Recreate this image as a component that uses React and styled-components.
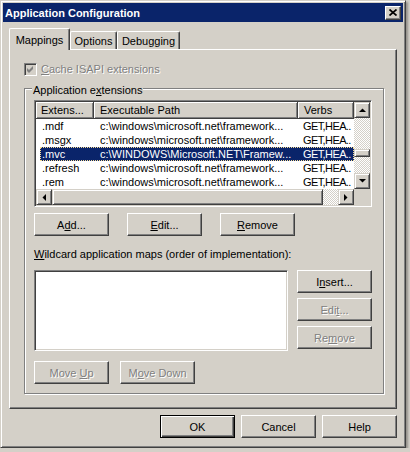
import React from "react";
import styled, { createGlobalStyle, css } from "styled-components";

const FACE = "#d4d0c8";
const SHADOW = "#808080";
const DARK = "#404040";
const NAVY = "#0a246a";

const GlobalStyle = createGlobalStyle`
  html, body { margin: 0; padding: 0; }
  body {
    background: #d4d0c8;
    font-family: "Liberation Sans", Arial, sans-serif;
    font-size: 11px;
    color: #000;
  }
  * { box-sizing: border-box; }
`;

const Window = styled.div`
  width: 406px;
  height: 448px;
  background: ${FACE};
  border: 1px solid;
  border-color: ${FACE} ${DARK} ${DARK} ${FACE};
  box-shadow: inset 1px 1px #fff, inset -1px -1px ${SHADOW},
    2px 2px 2px rgba(0, 0, 0, 0.3);
  padding: 2px;
  display: flex;
  flex-direction: column;
`;

const TitleBar = styled.div`
  height: 19px;
  background: ${NAVY};
  color: #fff;
  font-weight: bold;
  display: flex;
  align-items: center;
  justify-content: space-between;
  padding: 0 2px 0 2px;
`;

const CloseBtn = styled.div`
  width: 16px;
  height: 14px;
  background: ${FACE};
  border: 1px solid;
  border-color: #fff ${DARK} ${DARK} #fff;
  box-shadow: inset -1px -1px ${SHADOW};
  display: flex;
  align-items: center;
  justify-content: center;
`;

const Body = styled.div`
  flex: 1;
  padding: 6px 6px 0 6px;
  display: flex;
  flex-direction: column;
`;

const TabRow = styled.div`
  height: 21px;
  display: flex;
  align-items: flex-end;
`;

const Tab = styled.div`
  width: ${(p) => p.$w}px;
  height: 18px;
  padding-top: 1px;
  display: flex;
  align-items: center;
  justify-content: center;
  background: ${FACE};
  border-top: 1px solid #fff;
  border-left: 1px solid #fff;
  border-right: 1px solid ${DARK};
  box-shadow: inset -1px 0 ${SHADOW};
  border-radius: 2px 2px 0 0;
  ${(p) =>
    p.$active &&
    css`
      height: 22px;
      padding-top: 0;
      margin-bottom: -1px;
      position: relative;
      z-index: 1;
    `}
`;

const Panel = styled.div`
  height: 360px;
  background: ${FACE};
  border: 1px solid;
  border-color: #fff ${DARK} ${DARK} #fff;
  box-shadow: inset -1px -1px ${SHADOW};
  padding: 13px 12px 0 14px;
  display: flex;
  flex-direction: column;
`;

const CheckRow = styled.div`
  height: 13px;
  display: flex;
  align-items: center;
  gap: 4px;
`;

const CheckBox = styled.div`
  width: 13px;
  height: 13px;
  border: 1px solid;
  border-color: ${SHADOW} #fff #fff ${SHADOW};
  box-shadow: inset 1px 1px ${DARK}, inset -1px -1px ${FACE};
  background: ${FACE};
  display: flex;
  align-items: center;
  justify-content: center;
`;

const DisabledText = styled.span`
  color: ${SHADOW};
  text-shadow: 1px 1px #fff;
  line-height: 13px;
`;

const GroupBox = styled.div`
  margin-top: 12px;
  border: 1px solid ${SHADOW};
  box-shadow: inset 1px 1px #fff, 1px 1px #fff;
  padding: 0 11px 9px 9px;
  display: flex;
  flex-direction: column;
`;

const GroupLabel = styled.div`
  align-self: flex-start;
  margin: -5px 0 0 -2px;
  padding: 0 1px;
  line-height: 13px;
  background: ${FACE};
`;

const ListView = styled.div`
  margin-top: 3px;
  height: 107px;
  background: #fff;
  border: 1px solid;
  border-color: ${SHADOW} #fff #fff ${SHADOW};
  box-shadow: inset 1px 1px ${DARK}, inset -1px -1px ${FACE};
  padding: 1px;
  display: grid;
  grid-template-columns: 1fr 16px;
  grid-template-rows: 1fr 16px;
`;

const ListPane = styled.div`
  overflow: hidden;
  display: flex;
  flex-direction: column;
`;

const HeaderRow = styled.div`
  height: 17px;
  display: flex;
`;

const HeaderCell = styled.div`
  height: 17px;
  ${(p) => (p.$w ? css`width: ${p.$w}px;` : css`flex: 1;`)}
  padding-left: ${(p) => p.$pl}px;
  background: ${FACE};
  border-right: 1px solid ${DARK};
  border-bottom: 1px solid ${DARK};
  box-shadow: inset 1px 1px #fff, inset -1px -1px ${SHADOW};
  display: flex;
  align-items: center;
  white-space: nowrap;
  overflow: hidden;
`;

const Row = styled.div`
  height: 14px;
  display: flex;
`;

const RowBody = styled.div`
  margin-left: 4px;
  flex: 1;
  display: flex;
  ${(p) =>
    p.$selected &&
    css`
      background: ${NAVY};
      color: #fff;
      outline: 1px dotted #f5db95;
      outline-offset: -1px;
    `}
`;

const Cell = styled.div`
  ${(p) => (p.$w ? css`width: ${p.$w}px;` : css`flex: 1;`)}
  padding-left: ${(p) => p.$pl}px;
  line-height: 14px;
  white-space: nowrap;
  overflow: hidden;
  ${(p) => p.$tight && css`letter-spacing: -0.6px;`}
`;

const VScroll = styled.div`
  display: flex;
  flex-direction: column;
`;

const HScroll = styled.div`
  display: flex;
`;

const ScrollBtn = styled.div`
  width: 16px;
  height: 16px;
  flex: none;
  background: ${FACE};
  border: 1px solid;
  border-color: ${FACE} ${DARK} ${DARK} ${FACE};
  box-shadow: inset 1px 1px #fff, inset -1px -1px ${SHADOW};
  display: flex;
  align-items: center;
  justify-content: center;
`;

const Thumb = styled(ScrollBtn)`
  ${(p) => (p.$vertical ? css`height: ${p.$len}px;` : css`width: ${p.$len}px;`)}
`;

const Track = styled.div`
  flex: ${(p) => (p.$len != null ? "none" : "1")};
  ${(p) => p.$len != null && (p.$vertical ? css`height: ${p.$len}px;` : css`width: ${p.$len}px;`)}
  background: repeating-conic-gradient(#fff 0 25%, ${FACE} 0 50%) 0 0 / 2px 2px;
`;

const Corner = styled.div`
  background: ${FACE};
`;

const ButtonRow = styled.div`
  display: flex;
  gap: ${(p) => p.$gap}px;
  margin-top: ${(p) => p.$mt}px;
  justify-content: ${(p) => (p.$end ? "flex-end" : "flex-start")};
`;

const Button = styled.button`
  width: 75px;
  height: 23px;
  padding: 0;
  font: inherit;
  color: #000;
  background: ${FACE};
  border: 1px solid;
  border-color: #fff ${DARK} ${DARK} #fff;
  box-shadow: inset -1px -1px ${SHADOW};
  display: flex;
  align-items: center;
  justify-content: center;
  &:disabled {
    color: ${SHADOW};
    text-shadow: 1px 1px #fff;
  }
  ${(p) =>
    p.$default &&
    css`
      border-color: #000;
      box-shadow: inset 1px 1px #fff, inset -1px -1px ${DARK},
        inset -2px -2px ${SHADOW};
    `}
`;

const ButtonText = styled.span`
  white-space: pre;
`;

const Label = styled.div`
  margin-top: 12px;
  line-height: 13px;
`;

const WildArea = styled.div`
  margin-top: 9px;
  display: flex;
  gap: 9px;
`;

const ListBox = styled.div`
  width: 254px;
  height: 81px;
  background: #fff;
  border: 1px solid;
  border-color: ${SHADOW} #fff #fff ${SHADOW};
  box-shadow: inset 1px 1px ${DARK}, inset -1px -1px ${FACE};
`;

const SideButtons = styled.div`
  display: flex;
  flex-direction: column;
  gap: 5px;
`;

const Arrow = ({ dir }) => {
  const pts = {
    up: "0,4 7,4 3.5,0.5",
    down: "0,0 7,0 3.5,3.5",
    left: "4,0 4,7 0.5,3.5",
    right: "0,0 0,7 3.5,3.5",
  }[dir];
  const vert = dir === "up" || dir === "down";
  return (
    <svg width={vert ? 7 : 4} height={vert ? 4 : 7} viewBox={vert ? "0 0 7 4" : "0 0 4 7"}>
      <polygon points={pts} fill="#000" />
    </svg>
  );
};

const Btn = ({ children, ...rest }) => (
  <Button {...rest}>
    <ButtonText>{children}</ButtonText>
  </Button>
);

const rows = [
  [".mdf", "c:\\windows\\microsoft.net\\framework...", "GET,HEA.."],
  [".msgx", "c:\\windows\\microsoft.net\\framework...", "GET,HEA.."],
  [".mvc", "c:\\WINDOWS\\Microsoft.NET\\Framew...", "GET,HEA..", true],
  [".refresh", "c:\\windows\\microsoft.net\\framework...", "GET,HEA.."],
  [".rem", "c:\\windows\\microsoft.net\\framework...", "GET,HEA.."],
];

export default function App() {
  return (
    <>
      <GlobalStyle />
      <Window>
        <TitleBar>
          <span>Application Configuration</span>
          <CloseBtn>
            <svg width="8" height="7" viewBox="0 0 8 7">
              <path d="M0.5 0.5 L7.5 6.5 M7.5 0.5 L0.5 6.5" stroke="#000" strokeWidth="1.7" />
            </svg>
          </CloseBtn>
        </TitleBar>
        <Body>
          <TabRow>
            <Tab $w={61} $active>Mappings</Tab>
            <Tab $w={47}>Options</Tab>
            <Tab $w={63}>Debugging</Tab>
          </TabRow>
          <Panel>
            <CheckRow>
              <CheckBox>
                <svg width="7" height="7" viewBox="0 0 7 7">
                  <polygon points="0,2 2,4 6,0 6,3 2,7 0,5" fill={SHADOW} />
                </svg>
              </CheckBox>
              <DisabledText>
                <u>C</u>ache ISAPI extensions
              </DisabledText>
            </CheckRow>
            <GroupBox>
              <GroupLabel>
                Application e<u>x</u>tensions
              </GroupLabel>
              <ListView>
                <ListPane>
                  <HeaderRow>
                    <HeaderCell $w={58} $pl={5}>Extens...</HeaderCell>
                    <HeaderCell $w={204} $pl={6}>Executable Path</HeaderCell>
                    <HeaderCell $pl={6}>Verbs</HeaderCell>
                  </HeaderRow>
                  {rows.map(([ext, path, verbs, sel]) => (
                    <Row key={ext}>
                      <RowBody $selected={sel}>
                        <Cell $w={54} $pl={2}>{ext}</Cell>
                        <Cell $w={204} $pl={6}>{path}</Cell>
                        <Cell $pl={5} $tight>{verbs}</Cell>
                      </RowBody>
                    </Row>
                  ))}
                </ListPane>
                <VScroll>
                  <ScrollBtn><Arrow dir="up" /></ScrollBtn>
                  <Track $vertical $len={31} />
                  <Thumb $vertical $len={8} />
                  <Track />
                  <ScrollBtn><Arrow dir="down" /></ScrollBtn>
                </VScroll>
                <HScroll>
                  <ScrollBtn><Arrow dir="left" /></ScrollBtn>
                  <Thumb $len={271} />
                  <Track />
                  <ScrollBtn><Arrow dir="right" /></ScrollBtn>
                </HScroll>
                <Corner />
              </ListView>
              <ButtonRow $gap={18} $mt={6}>
                <Btn>A<u>d</u>d...</Btn>
                <Btn><u>E</u>dit...</Btn>
                <Btn><u>R</u>emove</Btn>
              </ButtonRow>
              <Label>
                <u>W</u>ildcard application maps (order of implementation):
              </Label>
              <WildArea>
                <ListBox />
                <SideButtons>
                  <Btn>I<u>n</u>sert...</Btn>
                  <Btn disabled>Edi<u>t</u>...</Btn>
                  <Btn disabled>Re<u>m</u>ove</Btn>
                </SideButtons>
              </WildArea>
              <ButtonRow $gap={11} $mt={10}>
                <Btn disabled>Move <u>U</u>p</Btn>
                <Btn disabled>M<u>o</u>ve Down</Btn>
              </ButtonRow>
            </GroupBox>
          </Panel>
          <ButtonRow $gap={6} $mt={6} $end>
            <Btn $default>OK</Btn>
            <Btn>Cancel</Btn>
            <Btn>Help</Btn>
          </ButtonRow>
        </Body>
      </Window>
    </>
  );
}
